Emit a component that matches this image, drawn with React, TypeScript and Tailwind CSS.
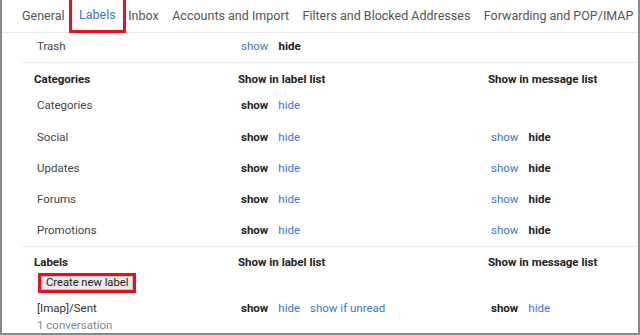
import React from 'react';

/* ─── Datos ─────────────────────────────────────────── */
const tabs = [
  'General',
  'Labels',
  'Inbox',
  'Accounts and Import',
  'Filters and Blocked Addresses',
  'Forwarding and POP/IMAP',
];

const categoryRows = [
  { name: 'Categories', msg: false },
  { name: 'Social', msg: true },
  { name: 'Updates', msg: true },
  { name: 'Forums', msg: true },
  { name: 'Promotions', msg: true },
];

const link = 'text-[#3a76dc] cursor-pointer';
const bold = 'font-bold text-[#222]';
const cols = 'grid grid-cols-[216px_250px_1fr]';

function ShowHide({ active }: { active: 'show' | 'hide' }) {
  return (
    <div className="flex gap-[10px]">
      <span className={active === 'show' ? bold : link}>show</span>
      <span className={active === 'hide' ? bold : link}>hide</span>
    </div>
  );
}

/* ─── Componente ────────────────────────────────────── */
export default function App() {
  return (
    <div
      className="w-[640px] h-[335px] overflow-hidden bg-white border-x-2 border-b-2 border-[#8a8a8a] text-[11.5px] leading-[16px] text-[#444]"
      style={{ fontFamily: 'Roboto, "Liberation Sans", Arial, sans-serif' }}
    >
      {/* Pestañas */}
      <div className="flex items-center h-[33px] pl-[20px] gap-[13.5px] border-b border-[#ececec] text-[12.5px] text-[#555] whitespace-nowrap">
        {tabs.map((t) =>
          t === 'Labels' ? (
            <div
              key={t}
              className="h-[33px] px-[7px] -ml-[9px] -mr-[11px] flex items-center border-[3px] border-t-0 border-[#e3121c] text-[#3a76dc]"
            >
              {t}
            </div>
          ) : (
            <div key={t}>{t}</div>
          )
        )}
      </div>

      <div className="ml-[20px]">
        {/* Trash */}
        <div className={`${cols} h-[30px] pt-[5px] border-b border-[#ececec]`}>
          <div className="pl-[15px]">Trash</div>
          <div className="pl-[3px]">
            <ShowHide active="hide" />
          </div>
          <div />
        </div>

        {/* Categorías */}
        <div className={`${cols} h-[26px] pt-[8px] ${bold}`}>
          <div className="pl-[12px]">Categories</div>
          <div>Show in label list</div>
          <div>Show in message list</div>
        </div>
        {categoryRows.map((r, i) => (
          <div
            key={r.name}
            className={`${cols} pt-[8px] ${
              i === 0 ? 'h-[32px]' : i === 4 ? 'h-[33px] border-b border-[#ececec]' : 'h-[31px]'
            }`}
          >
            <div className="pl-[15px]">{r.name}</div>
            <div className="pl-[3px]">
              <ShowHide active="show" />
            </div>
            <div className="pl-[3px]">{r.msg && <ShowHide active="hide" />}</div>
          </div>
        ))}

        {/* Etiquetas */}
        <div className={`${cols} h-[26px] pt-[7px] ${bold}`}>
          <div className="pl-[12px]">Labels</div>
          <div>Show in label list</div>
          <div>Show in message list</div>
        </div>
        <div className="pl-[16px] h-[27px]">
          <div className="inline-block border-[3px] border-[#e3121c]">
            <button className="block h-[14px] px-[4px] border border-[#c4c4c4] bg-[#ececec] text-[#222] text-[11.2px] leading-[12px] whitespace-nowrap">
              Create new label
            </button>
          </div>
        </div>
        <div className={cols}>
          <div className="pl-[15px]">
            <div className="text-[#333]">[Imap]/Sent</div>
            <div className="text-[#888] leading-[17px] pt-[1px]">1 conversation</div>
          </div>
          <div className="pl-[3px] flex gap-[10px]">
            <span className={bold}>show</span>
            <span className={link}>hide</span>
            <span className={link}>show if unread</span>
          </div>
          <div className="pl-[3px]">
            <div className="flex gap-[10px]">
              <span className={bold}>show</span>
              <span className={link}>hide</span>
            </div>
          </div>
        </div>
      </div>
    </div>
  );
}
